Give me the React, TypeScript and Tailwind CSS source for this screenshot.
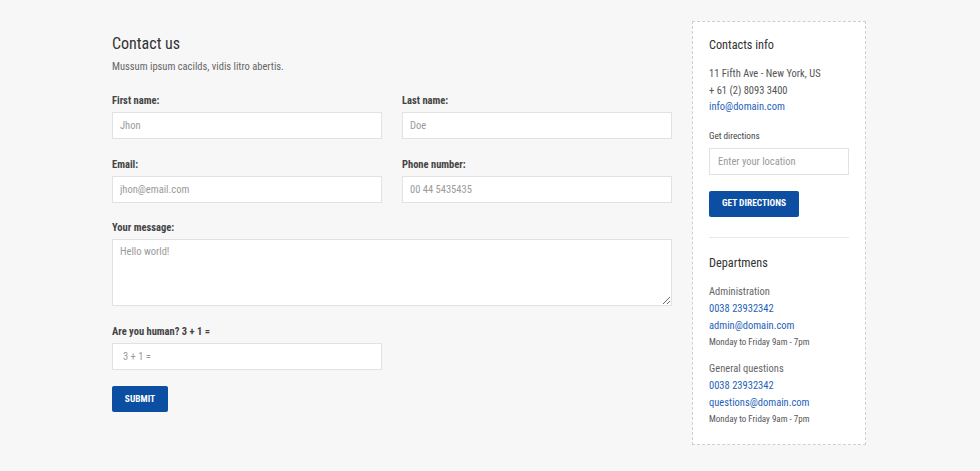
import React from "react";

const font = { fontFamily: "Roboto, 'Liberation Sans', sans-serif" };

function Field({ label, placeholder }: { label: string; placeholder: string }) {
  return (
    <div className="flex flex-col">
      <label className="text-[10.5px] leading-[18px] font-bold text-[#444]">{label}</label>
      <input
        placeholder={placeholder}
        className="mt-[2px] h-[27px] w-full border border-[#e2e2e2] bg-white px-[7px] text-[10.5px] text-[#555] outline-none placeholder:text-[#9a9a9a]"
      />
    </div>
  );
}

function Department({ name, phone, email }: { name: string; phone: string; email: string }) {
  return (
    <div className="flex flex-col text-[10.5px] leading-[17px]">
      <span className="text-[#666]">{name}</span>
      <a className="text-[#1f63b8]">{phone}</a>
      <a className="text-[#1f63b8]">{email}</a>
      <span className="text-[9px] text-[#555]">Monday to Friday 9am - 7pm</span>
    </div>
  );
}

export default function App() {
  return (
    <div className="min-h-screen bg-[#f7f7f7] font-stretch-condensed" style={font}>
      <div className="mx-auto flex w-[756px] gap-5 pt-[21px]">
        {/* contact form */}
        <div className="w-[560px] pt-[11px]">
          <h1 className="text-[16px] leading-[24px] text-[#333]">Contact us</h1>
          <p className="mt-[2px] text-[10.5px] leading-[18px] text-[#666]">
            Mussum ipsum cacilds, vidis litro abertis.
          </p>

          <div className="mt-[16px] grid grid-cols-2 gap-x-5 gap-y-[16.5px]">
            <Field label="First name:" placeholder="Jhon" />
            <Field label="Last name:" placeholder="Doe" />
            <Field label="Email:" placeholder="jhon@email.com" />
            <Field label="Phone number:" placeholder="00 44 5435435" />
            <div className="col-span-2 flex flex-col">
              <label className="text-[10.5px] leading-[18px] font-bold text-[#444]">Your message:</label>
              <textarea
                placeholder="Hello world!"
                className="mt-[2px] h-[67px] w-full border border-[#e2e2e2] bg-white px-[7px] py-[4px] text-[10.5px] text-[#555] outline-none placeholder:text-[#9a9a9a]"
              />
            </div>
            <div className="flex flex-col">
              <label className="text-[10.5px] leading-[18px] font-bold text-[#444]">Are you human? 3 + 1 =</label>
              <input
                placeholder="3 + 1 ="
                className="mt-[2px] h-[27px] w-full border border-[#e2e2e2] bg-white px-[10px] text-[10.5px] text-[#555] outline-none placeholder:text-[#9a9a9a]"
              />
            </div>
          </div>

          <button className="mt-[16.5px] h-[26px] w-[56px] rounded-[2px] bg-[#0b4ea2] text-[9.4px] font-bold uppercase text-white">
            Submit
          </button>
        </div>

        {/* sidebar */}
        <aside className="w-[174px] border border-dashed border-[#cfcfcf] bg-white px-4 pt-[13px] pb-4">
          <h2 className="text-[12.25px] leading-[20px] text-[#333]">Contacts info</h2>
          <div className="mt-[11px] flex flex-col text-[10.5px] leading-[16.5px] text-[#555]">
            <span>11 Fifth Ave - New York, US</span>
            <span>+ 61 (2) 8093 3400</span>
            <a className="text-[#1f63b8]">info@domain.com</a>
          </div>
          <p className="mt-[12px] text-[9.2px] leading-[16px] text-[#444]">Get directions</p>
          <input
            placeholder="Enter your location"
            className="mt-[4px] h-[27px] w-full border border-[#e2e2e2] bg-white px-2 text-[10.5px] text-[#555] outline-none placeholder:text-[#9a9a9a]"
          />
          <button className="mt-[16px] h-[26px] w-[90px] rounded-[2px] bg-[#0b4ea2] text-[9.4px] font-bold uppercase text-white">
            Get directions
          </button>
          <hr className="mt-[20px] border-t border-[#e8e8e8]" />
          <h2 className="mt-[15px] text-[12.25px] leading-[20px] text-[#333]">Departmens</h2>
          <div className="mt-[10px] flex flex-col gap-[9px]">
            <Department name="Administration" phone="0038 23932342" email="admin@domain.com" />
            <Department name="General questions" phone="0038 23932342" email="questions@domain.com" />
          </div>
        </aside>
      </div>
    </div>
  );
}
